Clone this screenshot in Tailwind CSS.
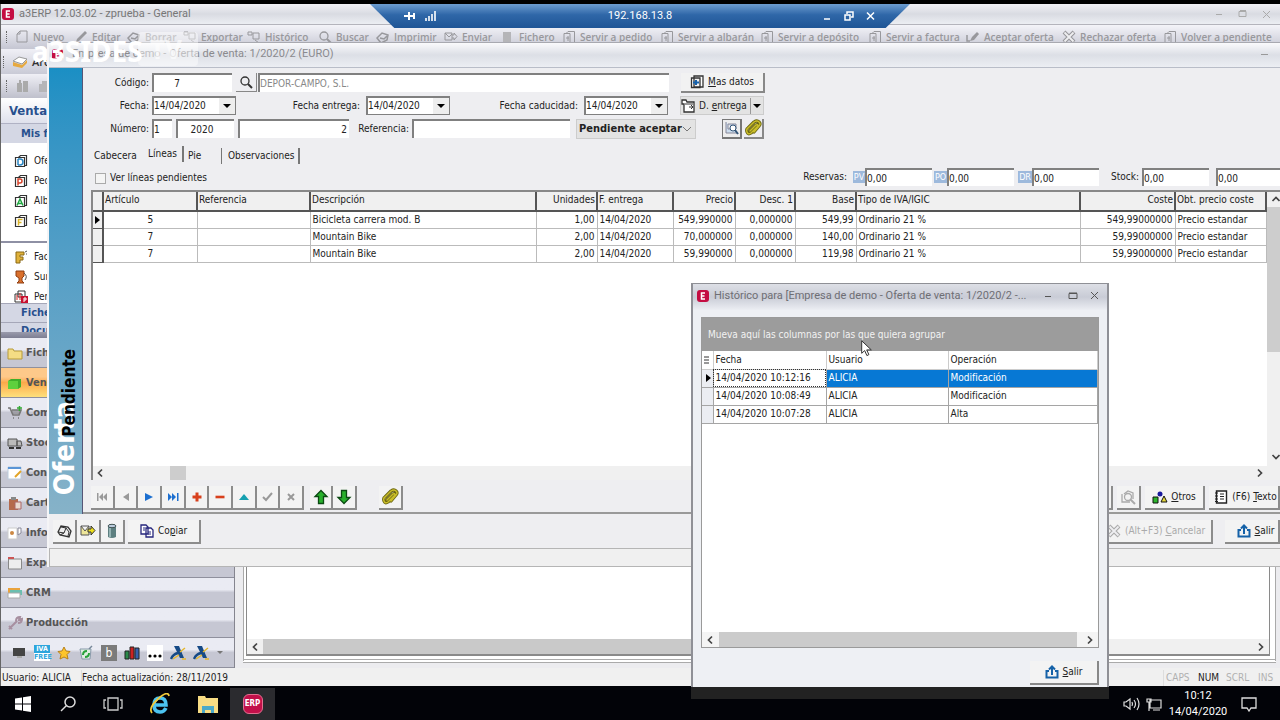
<!DOCTYPE html>
<html lang="es">
<head>
<meta charset="utf-8">
<title>a3ERP 12.03.02 - zprueba - General</title>
<script src="https://cdn.jsdelivr.net/npm/@tailwindcss/browser@4"></script>
</head>
<body class="relative flex h-screen flex-col overflow-hidden bg-black pt-1 font-['DejaVu_Sans_Condensed','DejaVu_Sans',sans-serif] text-[10px] leading-4 text-[#222]">

<svg class="hidden" xmlns="http://www.w3.org/2000/svg">
  <symbol id="e" viewBox="0 0 12 12"><rect width="12" height="12" rx="3" fill="#c40d42"/><path d="M8 3H4.500v6H8M4.500 6h3" fill="none" stroke="#fff" stroke-width="1.500"/></symbol>
  <symbol id="doc" viewBox="0 0 14 14"><path d="M5 1h7v11H2V4z M5 1v3H2" fill="none" stroke="currentColor"/></symbol>
  <symbol id="pen" viewBox="0 0 14 14"><path d="M2 12l1-3 8-8 2 2-8 8z" fill="currentColor"/></symbol>
  <symbol id="docs" viewBox="0 0 14 14"><path d="M4 3.500l2-2h6.500v11H10M4 3.500H2v9h6v-9zM6 6v5M4 8h3" fill="none" stroke="currentColor"/></symbol>
  <symbol id="era" viewBox="0 0 14 14"><path d="M1 8l5-5 6 2-1 5-6 3z M4 8l4 1 3-3" fill="none" stroke="currentColor" stroke-width="1.500"/></symbol>
  <symbol id="lens" viewBox="0 0 14 14"><circle cx="6" cy="6" r="4" fill="none" stroke="currentColor" stroke-width="1.300"/><path d="M9 9l4 4" stroke="currentColor" stroke-width="2"/></symbol>
  <symbol id="hist" viewBox="0 0 14 14"><path d="M1 2h4v3H1zM6 3h6v6H6zM8 10l4 3" fill="none" stroke="currentColor"/></symbol>
  <symbol id="send" viewBox="0 0 14 14"><path d="M1 3h7v7H1zM1 3l4 4 3-3M8 5h2V3l3 3.500-3 3.500V8H8" fill="none" stroke="currentColor"/></symbol>
  <symbol id="print" viewBox="0 0 16 16"><path d="M2 9l3-6 7 1 3 4-2 6-9-2z" fill="#eee" stroke="currentColor" stroke-width="1.300"/><path d="M5 4l5 1-2 5-6-1M10 5l3 4-1 4M4 12l4-2" fill="none" stroke="currentColor"/></symbol>
  <symbol id="chk" viewBox="0 0 14 14"><path d="M1 5v6h3" fill="none" stroke="currentColor" stroke-width="1.500"/><path d="M4 11l2-4 5-5 2 2-5 6z" fill="currentColor"/></symbol>
  <symbol id="xx" viewBox="0 0 14 14"><path d="M2 2l10 10M12 2L2 12" stroke="currentColor" stroke-width="4"/><path d="M2.500 2.500l9 9M11.500 2.500l-9 9" stroke="#eeeef1" stroke-width="1.800"/></symbol>
  <symbol id="clip" viewBox="0 0 18 18"><g fill="none" stroke-linecap="round" stroke-linejoin="round"><path d="M6 12l6-6q2-1 2 1l-7 7q-3 2-4-1t1-4l6-6q3-2 5 0t0 4l-5 6" stroke="#6b6610" stroke-width="3.200"/><path d="M6 12l6-6q2-1 2 1l-7 7q-3 2-4-1t1-4l6-6q3-2 5 0t0 4l-5 6" stroke="#c9bd2a" stroke-width="1.500"/></g></symbol>
  <symbol id="exit" viewBox="0 0 14 14"><path d="M4 6H1.500v6.500h11V6H10M7 10V2M4 4.500L7 1.500l3 3" fill="none" stroke="#1662a8" stroke-width="2"/></symbol>
  <symbol id="left" viewBox="0 0 10 10"><path d="M7 1.500L3.500 5 7 8.500" fill="none" stroke="#444" stroke-width="1.700"/></symbol>
  <symbol id="right" viewBox="0 0 10 10"><path d="M3 1.500L6.500 5 3 8.500" fill="none" stroke="#444" stroke-width="1.700"/></symbol>
  <symbol id="copy" viewBox="0 0 14 14"><path d="M1 1h5l2 2v7H1zM6 4h5l2 2v7H6z" fill="#fff" stroke="#26267c" stroke-width="1.300"/><path d="M3 4h2M3 6h2M8 8h3M8 10h3" stroke="#26267c"/></symbol>
  <symbol id="page" viewBox="0 0 14 14"><path d="M4.500 3.500l2-2h6v10h-2M4.500 3.500h-3v9h9v-9z" fill="#fff" stroke="#333" stroke-width="1.200"/></symbol>
  <symbol id="aeat" viewBox="0 0 16 14"><path d="M4 0h5l5 12h-4z" fill="#164a86"/><path d="M1 13Q3 8 8 7" fill="none" stroke="#164a86" stroke-width="2.500"/><path d="M10 6l5-4M3 13l6-4M12 13h4" stroke="#e5b72c" stroke-width="1.500"/></symbol>
</svg>

<!-- Main application window -->
<main class="flex min-h-0 flex-1 flex-col border-l border-[#666] bg-[#f0f0f2]">
  <header class="flex h-[21px] shrink-0 items-center gap-1 border-b border-[#b4b4bc] bg-linear-to-b from-[#f1f1f5] via-[#d9dbe2] to-[#eceef3] pr-2 pl-px font-[Roboto,sans-serif] text-[11px] text-[#777]">
    <svg class="size-3"><use href="#e"/></svg>
    <h1 class="flex-1 pl-px">a3ERP 12.03.02 - zprueba - General</h1>
    <svg class="h-3 w-14 text-[#aaa]" viewBox="0 0 56 12" fill="none" stroke="currentColor"><path d="M0 6.500h6M23 3.500h7v5h-7zM24 2.500h6M47 3l7 7M54 3l-7 7"/></svg>
  </header>
  <nav class="flex h-6 shrink-0 items-center bg-linear-to-b from-[#f4f4f9] to-[#c5c6d2] pl-[5px] font-['Open_Sans',sans-serif] text-[10px] font-semibold whitespace-nowrap text-[#98989c]">
    <span class="mr-2 h-3 w-0 border-l border-dotted border-[#666]"></span>
    <button class="flex w-[59px] shrink-0 items-center gap-1"><svg class="size-[14px]"><use href="#doc"/></svg>Nuevo</button>
    <button class="flex w-[53px] shrink-0 items-center gap-1"><svg class="size-[14px]"><use href="#pen"/></svg>Editar</button>
    <button class="flex w-[56px] shrink-0 items-center gap-1"><svg class="size-[14px]"><use href="#era"/></svg>Borrar</button>
    <button class="flex w-[64px] shrink-0 items-center gap-1"><svg class="size-[14px]"><use href="#hist"/></svg>Exportar</button>
    <button class="flex w-[71px] shrink-0 items-center gap-1"><svg class="size-[14px]"><use href="#hist"/></svg>Histórico</button>
    <button class="flex w-[58px] shrink-0 items-center gap-1"><svg class="size-[14px]"><use href="#lens"/></svg>Buscar</button>
    <button class="flex w-[68px] shrink-0 items-center gap-1"><svg class="size-[14px]"><use href="#era"/></svg>Imprimir</button>
    <button class="flex w-[57px] shrink-0 items-center gap-1"><svg class="size-[14px]"><use href="#send"/></svg>Enviar</button>
    <button class="flex w-[61px] shrink-0 items-center gap-1"><svg class="size-[14px]" viewBox="0 0 14 14"><path d="M2 2h8v10H2z" fill="#b5b5b8"/></svg>Fichero</button>
    <button class="flex w-[98px] shrink-0 items-center gap-1"><svg class="size-[14px]"><use href="#docs"/></svg>Servir a pedido</button>
    <button class="flex w-[100px] shrink-0 items-center gap-1"><svg class="size-[14px]"><use href="#docs"/></svg>Servir a albarán</button>
    <button class="flex w-[108px] shrink-0 items-center gap-1"><svg class="size-[14px]"><use href="#docs"/></svg>Servir a depósito</button>
    <button class="flex w-[98px] shrink-0 items-center gap-1"><svg class="size-[14px]"><use href="#docs"/></svg>Servir a factura</button>
    <button class="flex w-[96px] shrink-0 items-center gap-1"><svg class="size-[14px]"><use href="#chk"/></svg>Aceptar oferta</button>
    <button class="flex w-[101px] shrink-0 items-center gap-1"><svg class="size-[14px]"><use href="#xx"/></svg>Rechazar oferta</button>
    <button class="flex shrink-0 items-center gap-1"><svg class="size-[14px]"><use href="#docs"/></svg>Volver a pendiente</button>
  </nav>
  <div class="flex h-[25px] shrink-0 items-center gap-1 bg-linear-to-b from-[#f0f0f6] to-[#c9cad6] pl-[2px]">
    <span class="mr-1 h-3 w-0 border-l border-dotted border-[#666]"></span>
    <svg class="size-4" viewBox="0 0 16 16"><path d="M1 7l6-4 8 2-5 5z" fill="#fff" stroke="#999"/><path d="M1 8v4l9 2 5-5V6l-5 5z" fill="#e7a93e"/></svg>
    <button class="font-['Open_Sans',sans-serif] text-[11px] font-semibold text-[#333]">Archivo</button>
  </div>
  <div class="flex h-6 shrink-0 items-center gap-2 bg-linear-to-b from-[#f0f0f6] to-[#bfc0cc] pl-[5px] text-[#aaa]">
    <span class="mr-px h-3 w-0 border-l border-dotted border-[#666]"></span>
    <svg class="size-[14px]" viewBox="0 0 14 14"><path d="M1 4h5v9H1zM7 2h5v11H7zM3 1h2v3H3z" fill="#aaa"/></svg>
    <svg class="size-[14px]" viewBox="0 0 14 14"><path d="M1 5h12v8H1zM4 2h6v3H4z" fill="#b5b5b8"/></svg>
  </div>

  <div class="flex min-h-0 flex-1">
    <aside class="flex w-[234px] shrink-0 flex-col border-r border-[#85858f] bg-[#d6d7e0]">
      <h2 class="flex h-[26px] shrink-0 items-center border-b border-[#b0b2c4] bg-linear-to-b from-white to-[#dfe1ec] pl-2 text-[13px] font-bold text-[#28508e]">Ventas</h2>
      <h3 class="flex h-[19px] shrink-0 items-center bg-[#d4d7e4] pl-5 text-[11px] font-bold text-[#28508e]">Mis favoritos</h3>
      <ul class="border-b-2 border-[#8e90a4] bg-white pt-2 pb-[10px] pl-[13px]">
        <li class="flex h-5 items-center gap-[6px]"><svg class="size-[14px]" viewBox="0 0 14 14"><use href="#page"/><path d="M4 5v6M4 5h2q3 0 3 3t-3 3H4" fill="none" stroke="#2b86c4" stroke-width="1.500"/></svg>Ofertas</li>
        <li class="flex h-5 items-center gap-[6px]"><svg class="size-[14px]" viewBox="0 0 14 14"><use href="#page"/><path d="M4 11.500V5h2q2 0 2 2T6 9H4" fill="none" stroke="#d8452c" stroke-width="1.500"/></svg>Pedidos</li>
        <li class="flex h-5 items-center gap-[6px]"><svg class="size-[14px]" viewBox="0 0 14 14"><use href="#page"/><path d="M3 11.500L6 5l3 6.500M4 9.500h4" fill="none" stroke="#21a843" stroke-width="1.500"/></svg>Albaranes</li>
        <li class="flex h-5 items-center gap-[6px]"><svg class="size-[14px]" viewBox="0 0 14 14"><use href="#page"/><path d="M4.500 11.500V5.500h4M4.500 8.500h3" fill="none" stroke="#d9b42a" stroke-width="1.500"/></svg>Facturas</li>
      </ul>
      <ul class="min-h-0 flex-1 bg-white pt-1 pl-[13px]">
        <li class="flex h-5 items-center gap-[6px]"><svg class="size-[14px]" viewBox="0 0 14 14"><path d="M2 2h8v3H6v2h3v3H6v3H2z" fill="#e0b23b" stroke="#8a6914"/><path d="M11 2l2-1M12 4h1" stroke="#555"/></svg>Facturar</li>
        <li class="flex h-5 items-center gap-[6px]"><svg class="size-[14px]" viewBox="0 0 14 14"><path d="M2 1h8v5l-2 2v3l2 2H3l2-2V8L2 6z" fill="#d9702c" stroke="#8e3d10"/><path d="M10 3q4 3 1 7" fill="none" stroke="#555"/></svg>Suministros</li>
        <li class="flex h-5 items-center gap-[6px]"><svg class="size-[14px]" viewBox="0 0 14 14"><path d="M1 4h7v8H1zM4 1h7v6H4z" fill="#fff" stroke="#333"/><path d="M3 5v5M6 3v7" stroke="#d22"/><path d="M7 6h7v7H7z" fill="#c8102e"/><path d="M10 12V8h2v2h-2" fill="none" stroke="#fff"/></svg>Pendientes</li>
      </ul>
      <h3 class="flex h-5 shrink-0 items-center border-t border-b border-[#a5a7b8] bg-[#d4d7e4] pl-5 text-[11px] font-bold text-[#28508e]">Ficheros</h3>
      <h3 class="h-[9px] shrink-0 overflow-hidden bg-[#d4d7e4] pl-5 text-[11px] font-bold text-[#28508e]">Documentos</h3>
      <div class="h-[6px] shrink-0 bg-linear-to-b from-[#9a9bac] to-[#7d7e92]"></div>
      <ul class="shrink-0 text-[11px] font-bold text-[#555]">
        <li class="flex h-[30px] items-center gap-[3px] border-b border-[#8f909d] bg-linear-to-b from-[#eaebf3] from-40% to-[#c6c7d3] to-50% pl-1.5"><svg class="size-4" viewBox="0 0 16 16"><path d="M1 4h5l1 2h8v8H1z" fill="#f4dc84" stroke="#b69a3a"/></svg>Ficheros</li>
        <li class="flex h-[30px] items-center gap-[3px] border-b border-[#8f909d] bg-linear-to-b from-[#fdc98a] from-30% via-[#fba94a] via-50% to-[#fde07c] pl-1.5"><svg class="size-4" viewBox="0 0 16 16"><path d="M1 6l3-2h10v8l-3 2H1z" fill="#3fae2a"/><path d="M1 6h10v8H1z" fill="#5ed03d"/></svg>Ventas</li>
        <li class="flex h-[30px] items-center gap-[3px] border-b border-[#8f909d] bg-linear-to-b from-[#eaebf3] from-40% to-[#c6c7d3] to-50% pl-1.5"><svg class="size-4" viewBox="0 0 16 16"><path d="M1 3h2l3 7h6l2-5H5M6 13h1M11 13h1" fill="none" stroke="#777" stroke-width="1.700"/><path d="M5 6h8M6 8h7" stroke="#777"/><path d="M10 3h5M12.500 1v5" stroke="#3a3" stroke-width="1.500"/></svg>Compras</li>
        <li class="flex h-[30px] items-center gap-[3px] border-b border-[#8f909d] bg-linear-to-b from-[#eaebf3] from-40% to-[#c6c7d3] to-50% pl-1.5"><svg class="size-4" viewBox="0 0 16 16"><path d="M1 4h9v7H1zM10 6h4l1 5h-5z" fill="#bbb" stroke="#555"/><path d="M2 13h5M9 13h5" stroke="#333" stroke-width="2"/></svg>Stocks</li>
        <li class="flex h-[30px] items-center gap-[3px] border-b border-[#8f909d] bg-linear-to-b from-[#eaebf3] from-40% to-[#c6c7d3] to-50% pl-1.5"><svg class="size-4" viewBox="0 0 16 16"><path d="M1 2h13v12H1z" fill="#fff" stroke="#bcd"/><path d="M1 3h13" stroke="#5b95d6" stroke-width="2"/><path d="M8 12l6-6" stroke="#e2a428" stroke-width="2"/></svg>Contabilidad</li>
        <li class="flex h-[30px] items-center gap-[3px] border-b border-[#8f909d] bg-linear-to-b from-[#eaebf3] from-40% to-[#c6c7d3] to-50% pl-1.5"><svg class="size-4" viewBox="0 0 16 16"><path d="M2 4h9v11H2z" fill="#b4694c"/><path d="M4 2h5v3H4z" fill="#888"/><path d="M8 7h6v7H8z" fill="#e9d8d0" stroke="#a66"/></svg>Cartera</li>
        <li class="flex h-[30px] items-center gap-[3px] border-b border-[#8f909d] bg-linear-to-b from-[#eaebf3] from-40% to-[#c6c7d3] to-50% pl-1.5"><svg class="size-4" viewBox="0 0 16 16"><path d="M1 3h9v11H1z" fill="#fff" stroke="#ccc"/><circle cx="5" cy="8" r="2" fill="#c84"/><path d="M11 3h3v5l-3 2z" fill="#fff" stroke="#889"/></svg>Informes</li>
        <li class="flex h-[30px] items-center gap-[3px] border-b border-[#8f909d] bg-linear-to-b from-[#eaebf3] from-40% to-[#c6c7d3] to-50% pl-1.5"><svg class="size-4" viewBox="0 0 16 16"><path d="M1.500 4h13v10h-13z" fill="#eee" stroke="#888"/><path d="M1 3h6" stroke="#c55" stroke-width="2"/></svg>Expediciones</li>
        <li class="flex h-[30px] items-center gap-[3px] border-b border-[#8f909d] bg-linear-to-b from-[#eaebf3] from-40% to-[#c6c7d3] to-50% pl-1.5"><svg class="size-4" viewBox="0 0 16 16"><path d="M1 3h12v8H1z" fill="#e9a23c"/><path d="M3 5h12v5H3z" fill="#6bbfb0"/><path d="M1 8h12v5H1z" fill="#fff" stroke="#aaa"/></svg>CRM</li>
        <li class="flex h-[30px] items-center gap-[3px] border-b border-[#8f909d] bg-linear-to-b from-[#eaebf3] from-40% to-[#c6c7d3] to-50% pl-1.5"><svg class="size-4" viewBox="0 0 16 16"><path d="M2 14l8-8M9 6q0-4 4-4l-1 3 3-1q0 4-4 4M2 11l3 3" fill="none" stroke="#a78fa0" stroke-width="2"/></svg>Producción</li>
      </ul>
      <div class="flex h-[30px] shrink-0 items-center gap-[7px] border-b border-[#8f909d] bg-linear-to-b from-[#eaebf3] from-40% to-[#c6c7d3] to-50% pl-[10px]">
        <svg class="size-4" viewBox="0 0 16 16"><path d="M2 3h12v8H2z" fill="#444"/><path d="M6 12h5" stroke="#aaa" stroke-width="2"/></svg>
        <span class="flex size-4 flex-col text-center text-[7px] leading-2 font-bold"><b class="bg-[#2ca5dc] text-white">IVA</b><b class="bg-white text-[#2ca5dc]">FREE</b></span>
        <svg class="size-[14px]" viewBox="0 0 14 14"><path d="M7 1l2 4 4 .5-3 3 1 4.500-4-2-4 2 1-4.500-3-3L5 5z" fill="#fdc52c" stroke="#b8801a"/></svg>
        <svg class="size-4" viewBox="0 0 16 16"><path d="M2 4h11l-1 10H4z" fill="#dfeee0" stroke="#89a"/><path d="M5 10q0-4 4-4M11 8q0 4-4 4" fill="none" stroke="#27a23a" stroke-width="2"/><path d="M11 4l3-3" stroke="#789" stroke-width="1.500"/></svg>
        <span class="flex size-4 items-center justify-center bg-[#7b7b7b] text-[12px] text-white">b</span>
        <svg class="size-4" viewBox="0 0 16 16"><path d="M1 6h4v8H1z" fill="#2b8a4a" stroke="#222"/><path d="M6 2h4v12H6z" fill="#c22" stroke="#222"/><path d="M11 3h4v11h-4z" fill="#3661ad" stroke="#222"/></svg>
        <svg class="size-4" viewBox="0 0 16 16"><path d="M0 0h16v16H0z" fill="#fff"/><circle cx="3" cy="11" r="1.600"/><circle cx="8" cy="11" r="1.600"/><circle cx="13" cy="11" r="1.600"/></svg>
        <svg class="size-4"><use href="#aeat"/></svg>
        <svg class="size-4"><use href="#aeat"/></svg>
        <svg class="size-2" viewBox="0 0 8 8"><path d="M1 2h6L4 5z" fill="#777"/></svg>
      </div>
    </aside>
    <section class="flex min-w-0 flex-1 flex-col bg-[#ececef] pr-1 pl-2">
      <div class="flex min-h-0 flex-1 flex-col border-x border-b-4 border-double border-[#aaa] bg-white pr-[5px] pb-[3px] pl-0.5">
        <div class="flex min-h-0 flex-1 flex-col justify-end border-x border-b-2 border-[#8a8a8a] bg-white">
          <div class="flex h-[15px] items-center bg-[#f0f0f0] px-[3px]"><svg class="size-[10px]"><use href="#left"/></svg><span class="mx-[3px] h-full w-3/4 bg-[#c9c9c9]"></span><span class="flex-1"></span><svg class="size-[10px]"><use href="#right"/></svg></div>
        </div>
      </div>
      <div class="h-[5px]"></div>
    </section>
  </div>
  <footer class="flex h-[18px] shrink-0 items-center bg-[#f0f0f0] pt-0.5 text-[#222]">
    <span class="w-[81px] border-r border-[#ddd] pl-px">Usuario: ALICIA</span>
    <span class="flex-1">Fecha actualización: 28/11/2019</span>
    <span class="w-[35px] border-l border-[#ddd] pl-0.5 text-[#b0b0b0]">CAPS</span>
    <span class="w-7">NUM</span>
    <span class="w-8 text-[#b0b0b0]">SCRL</span>
    <span class="w-[22px] text-[#b0b0b0]">INS</span>
  </footer>
</main>

<!-- Taskbar -->
<footer class="flex h-[34px] shrink-0 items-center bg-[#020308] pt-0.5 text-white">
  <button aria-label="Inicio" class="flex w-[45px] justify-center"><svg class="size-4" viewBox="0 0 16 16"><path d="M0 2.500l7-1v6H0zM8 1.300L16 0v7.500H8zM0 8.500h7v6l-7-1zM8 8.500h8V16l-8-1.300z" fill="#fff"/></svg></button>
  <button aria-label="Buscar" class="flex w-[45px] justify-center"><svg class="size-4" viewBox="0 0 16 16" fill="none" stroke="#ddd" stroke-width="1.500"><circle cx="10" cy="6" r="5"/><path d="M6.500 9.500L1 15"/></svg></button>
  <button aria-label="Vista de tareas" class="flex w-[45px] justify-center"><svg class="h-4 w-5" viewBox="0 0 20 16" fill="none" stroke="#ccc" stroke-width="1.300"><path d="M5 2h10v12H5zM3 4H1v8h2M17 4h2v8h-2"/></svg></button>
  <button aria-label="Internet Explorer" class="flex w-[50px] justify-center"><svg class="size-[22px]" viewBox="0 0 22 22" fill="none"><path d="M17 15q-2 4-6 4-6 0-6-7t6-7q6 0 6 7H6" stroke="#4cc3f0" stroke-width="3.600"/><path d="M3 20Q-1 15 9 6t11-3" stroke="#f0c93a" stroke-width="1.800"/></svg></button>
  <button aria-label="Explorador" class="flex w-[45px] justify-center"><svg class="size-5" viewBox="0 0 20 20"><path d="M0 2h7l1 2h12v15H0z" fill="#f7dc84"/><path d="M4 19v-7h12v7h-3v-3H7v3z" fill="#4ba9c9"/></svg></button>
  <button aria-label="a3ERP" class="flex h-full w-[45px] items-center justify-center bg-[#2b2b2f]"><span class="flex size-5 items-center justify-center rounded-md border border-[#e0708f] bg-[#c2104a] text-[8px] font-bold">ERP</span></button>
  <span class="flex-1"></span>
  <svg class="h-4 w-[42px]" viewBox="0 0 42 16" fill="none" stroke="#ddd" stroke-width="1.200"><path d="M3 6h2l4-3v10l-4-3H3zM11 6q1 2 0 4M13 4q3 4 0 8M16 2q4 6 0 12M29 4h11v8H29zM26 3h4v3h-4zM28 6v9M32 14h7"/></svg>
  <time class="w-[70px] text-center font-[Roboto,sans-serif] text-[11px] leading-4">10:12<br>14/04/2020</time>
  <button aria-label="Notificaciones" class="ml-2 mr-[23px] flex"><svg class="size-4" viewBox="0 0 16 16" fill="none" stroke="#ddd" stroke-width="1.300"><path d="M1 2h14v10h-5l-2 3-2-3H1z"/></svg></button>
</footer>

<!-- Offer window -->
<section class="absolute top-[42px] right-0 left-[47px] flex flex-col border-t border-l-2 border-[#a8a9b0] border-l-[#f4f4f6] bg-[#eeeef1]">
  <header class="flex h-[25px] items-center gap-2 border-b border-[#b9bdc8] bg-linear-to-b from-[#fafafc] via-[#dcdfe6] to-[#eceef3] pr-3 pb-0.5 pl-[3px] font-[Roboto,sans-serif] text-[11px] text-[#8a8a8e]">
    <svg class="size-[11px]"><use href="#e"/></svg>
    <h2 class="flex-1 pl-px">Empresa de demo - Oferta de venta: 1/2020/2 (EURO)</h2>
    <span class="h-px w-[7px] bg-[#999]"></span>
  </header>
  <div class="flex h-[446px]">
    <div class="relative w-[34px] shrink-0 border-r border-[#557] bg-linear-to-b from-[#1a8fc4] to-[#86b2c8]">
      <span class="absolute bottom-[19px] left-0.5 rotate-180 text-[29px] leading-[27px] font-bold text-white [writing-mode:vertical-rl]">Oferta</span>
      <span class="absolute bottom-[77px] left-[10px] rotate-180 text-[17px] leading-5 font-bold text-black [writing-mode:vertical-rl]">Pendiente</span>
    </div>
    <div class="flex min-w-0 flex-1 flex-col border-b-2 border-[#999] pl-2">
      <form class="flex flex-col gap-1 pt-[5px] pl-0.5">
        <div class="flex h-[19px] items-center">
          <label for="cod" class="w-[59px] pr-[3px] text-right">Código:</label>
          <input id="cod" value="7" class="h-full w-20 border-t-2 border-l-2 border-[#808080] bg-white pr-8 text-center">
          <button type="button" aria-label="Buscar código" class="mr-px ml-1 flex h-full w-[21px] items-center justify-center border-r border-b border-[#888]"><svg class="size-[14px] text-[#333]"><use href="#lens"/></svg></button>
          <input aria-label="Cliente" value="DEPOR-CAMPO, S.L." class="mr-3 h-full w-[411px] border-t-2 border-l-2 border-[#808080] bg-white text-[#888]">
          <button type="button" class="flex h-5 w-[84px] items-center justify-center gap-1 border-r-2 border-b-2 border-[#888] bg-[#f2f2f2]"><svg class="size-[14px]" viewBox="0 0 14 14"><path d="M4 1h9v11H4zM1.500 3v9.500H10V3z" fill="#fff" stroke="#333" stroke-width="1.300"/><path d="M3 7.500h6M6 5v5" stroke="#1762ac" stroke-width="2"/></svg><span><u>M</u>as datos</span></button>
        </div>
        <div class="flex h-[19px] items-center">
          <label for="fec" class="w-[59px] pr-[3px] text-right">Fecha:</label>
          <div class="flex h-full w-[84px] border-t-2 border-r border-b border-l-2 border-[#808080] bg-white"><input id="fec" value="14/04/2020" class="min-w-0 flex-1"><button type="button" aria-label="Abrir calendario" class="flex w-4 items-center justify-center bg-[#eee]"><svg class="size-2" viewBox="0 0 8 8"><path d="M0 2h8L4 6z"/></svg></button></div>
          <label for="fen" class="w-[130px] pr-[6px] text-right">Fecha entrega:</label>
          <div class="flex h-full w-[84px] border-t-2 border-r border-b border-l-2 border-[#808080] bg-white"><input id="fen" value="14/04/2020" class="min-w-0 flex-1"><button type="button" aria-label="Abrir calendario" class="flex w-4 items-center justify-center bg-[#eee]"><svg class="size-2" viewBox="0 0 8 8"><path d="M0 2h8L4 6z"/></svg></button></div>
          <label for="fca" class="w-[134px] pr-[6px] text-right">Fecha caducidad:</label>
          <div class="mr-3 flex h-full w-[84px] border-t-2 border-r border-b border-l-2 border-[#808080] bg-white"><input id="fca" value="14/04/2020" class="min-w-0 flex-1"><button type="button" aria-label="Abrir calendario" class="flex w-4 items-center justify-center bg-[#eee]"><svg class="size-2" viewBox="0 0 8 8"><path d="M0 2h8L4 6z"/></svg></button></div>
          <button type="button" class="flex h-full w-[84px] items-center border border-[#ccc] bg-[#e3e3e3]"><svg class="mr-1 size-[14px]" viewBox="0 0 14 14"><path d="M1 1h4l1 2h7v10H3V5H1z" fill="#fff" stroke="#333" stroke-width="1.300"/><path d="M4 5h8M8 8h4M10 6l2 2-2 2" fill="none" stroke="#333"/></svg><span class="flex-1 border-r border-[#999] text-left">D. <u>e</u>ntrega</span><svg class="mx-0.5 size-2" viewBox="0 0 8 8"><path d="M0 2h8L4 6z"/></svg></button>
        </div>
        <div class="flex h-[19px] items-center">
          <label for="num" class="w-[59px] pr-[3px] text-right">Número:</label>
          <input id="num" value="1" class="mr-1 h-full w-5 border-t-2 border-l-2 border-[#808080] bg-white">
          <input aria-label="Ejercicio" value="2020" class="mr-1 h-full w-[58px] border-t-2 border-l-2 border-[#808080] bg-white pr-2 text-center">
          <input aria-label="Número de oferta" value="2" class="h-full w-[111px] border-t-2 border-l-2 border-[#808080] bg-white pr-[2px] text-right">
          <label for="ref" class="w-[63px] pr-[3px] text-right">Referencia:</label>
          <input id="ref" class="mr-[6px] h-full w-[158px] border-t-2 border-l-2 border-[#808080] bg-white">
          <div class="mr-[26px] flex h-5 w-[120px] items-center border border-[#ccc] bg-[#e3e3e3] pl-0.5"><select aria-label="Estado" class="flex-1 appearance-none text-[11px] font-bold"><option>Pendiente aceptar</option></select><svg class="mr-1 size-2" viewBox="0 0 8 8"><path d="M0 2l4 4 4-4" fill="none" stroke="#777"/></svg></div>
          <button type="button" aria-label="Vista previa" class="mr-[2px] flex size-5 items-center justify-center border-2 border-t border-l border-[#777] bg-[#eee]"><svg class="size-4" viewBox="0 0 16 16"><path d="M2 2v11h11M4 4h8v5H4z" fill="#cde" stroke="#889"/><circle cx="9" cy="8" r="3" fill="#fff" stroke="#357"/><path d="M11 10l3 4" stroke="#357" stroke-width="2"/></svg></button>
          <button type="button" aria-label="Adjuntos" class="flex size-5 items-center justify-center border-r-2 border-b-2 border-[#888]"><svg class="size-[18px]"><use href="#clip"/></svg></button>
        </div>
      </form>
      <div role="tablist" class="mt-[9px] flex h-[18px] items-center pl-[3px] leading-[18px]">
        <button role="tab" class="w-[54px] text-left">Cabecera</button>
        <button role="tab" class="mb-1 w-9 border-r-2 border-[#777] text-left leading-4">Líneas</button>
        <button role="tab" class="w-[38px] border-r border-[#777] pl-1 text-left leading-4">Pie</button>
        <button role="tab" class="w-[78px] border-r-2 border-[#777] pl-[6px] text-left leading-4">Observaciones</button>
      </div>
      <div class="mt-[3px] flex h-[18px] items-center">
        <label class="flex flex-1 items-center gap-1 pt-0.5 pl-1"><input type="checkbox" class="size-[11px] appearance-none border border-[#aaa] bg-[#f4f4f4]">Ver líneas pendientes</label>
        <label for="pv" class="pr-[6px]">Reservas:</label>
        <span class="w-3 bg-[#9db9dc] text-center text-[9px] leading-3 text-white">PV</span><input id="pv" value="0,00" class="mr-[2px] h-full w-[67px] border-t-2 border-l-2 border-[#808080] bg-white">
        <span class="w-[13px] bg-[#9db9dc] text-center text-[9px] leading-3 text-white">PO</span><input aria-label="PO" value="0,00" class="mr-1 h-full w-[67px] border-t-2 border-l-2 border-[#808080] bg-white">
        <span class="w-[14px] bg-[#9db9dc] text-center text-[9px] leading-3 text-white">DR</span><input aria-label="DR" value="0,00" class="mr-3 h-full w-[67px] border-t-2 border-l-2 border-[#808080] bg-white">
        <label for="st" class="pr-[3px]">Stock:</label>
        <input id="st" value="0,00" class="mr-[7px] h-full w-[67px] border-t-2 border-l-2 border-[#808080] bg-white">
        <input aria-label="Stock total" value="0,00" class="h-full w-16 border-t-2 border-l-2 border-[#808080] bg-white">
      </div>
      <div class="mt-1 flex min-h-0 flex-1 border-t-2 border-l-2 border-[#888] bg-white">
        <div class="flex min-w-0 flex-1 flex-col">
          <table class="w-full table-fixed border-collapse whitespace-nowrap">
            <colgroup><col class="w-[10px]"><col class="w-[94px]"><col class="w-[113px]"><col class="w-[226px]"><col class="w-[61px]"><col class="w-[76px]"><col class="w-[62px]"><col class="w-[60px]"><col class="w-[61px]"><col><col class="w-[95px]"><col class="w-[91px]"></colgroup>
            <thead><tr class="h-[19px] border-b-2 border-[#555] bg-[#f0f0f0] text-left [&>th]:border-r-2 [&>th]:border-[#555] [&>th]:px-px [&>th]:pb-0.5 [&>th]:font-normal">
              <th></th><th>Artículo</th><th>Referencia</th><th>Descripción</th><th class="text-right">Unidades</th><th>F. entrega</th><th class="text-right">Precio</th><th class="text-right">Desc. 1</th><th class="text-right">Base</th><th>Tipo de IVA/IGIC</th><th class="text-right">Coste</th><th>Obt. precio coste</th></tr></thead>
            <tbody class="[&_td]:h-[17px] [&_td]:border-r [&_td]:border-b [&_td]:border-[#bbb] [&_td]:px-0.5 [&_td]:leading-[14px] [&_td:first-child]:border-r-2 [&_td:first-child]:border-[#555] [&_td:first-child]:bg-[#f0f0f0]">
              <tr><td><svg class="h-2 w-[5px]" viewBox="0 0 5 8"><path d="M0 0v8l5-4z"/></svg></td><td class="text-center">5</td><td></td><td>Bicicleta carrera mod. B</td><td class="text-right">1,00</td><td>14/04/2020</td><td class="text-right">549,990000</td><td class="text-right">0,000000</td><td class="text-right">549,99</td><td>Ordinario 21 %</td><td class="text-right">549,99000000</td><td>Precio estandar</td></tr>
              <tr><td></td><td class="text-center">7</td><td></td><td>Mountain Bike</td><td class="text-right">2,00</td><td>14/04/2020</td><td class="text-right">70,000000</td><td class="text-right">0,000000</td><td class="text-right">140,00</td><td>Ordinario 21 %</td><td class="text-right">59,99000000</td><td>Precio estandar</td></tr>
              <tr><td></td><td class="text-center">7</td><td></td><td>Mountain Bike</td><td class="text-right">2,00</td><td>14/04/2020</td><td class="text-right">59,990000</td><td class="text-right">0,000000</td><td class="text-right">119,98</td><td>Ordinario 21 %</td><td class="text-right">59,99000000</td><td>Precio estandar</td></tr>
            </tbody>
          </table>
          <span class="flex-1"></span>
          <div class="flex h-[14px] items-center bg-[#f0f0f0] px-0.5"><svg class="mr-[65px] size-[10px]"><use href="#left"/></svg><span class="h-full w-4 bg-[#cdcdcd]"></span><span class="flex-1"></span><svg class="size-[10px]"><use href="#right"/></svg></div>
        </div>
        <div class="flex w-[13px] flex-col items-center bg-[#f0f0f0]"><svg class="mt-0.5 mb-[3px] ml-1 size-[10px] rotate-90"><use href="#left"/></svg><span class="h-[145px] w-full bg-[#cdcdcd]"></span><span class="flex-1"></span><svg class="mb-[18px] ml-1 size-[10px] rotate-90"><use href="#right"/></svg></div>
      </div>
      <div class="mt-[6px] mb-[2px] flex h-6 shrink-0 items-stretch overflow-hidden whitespace-nowrap [&>button]:flex [&>button]:items-center [&>button]:justify-center [&>button]:border-r-2 [&>button]:border-b-2 [&>button]:border-[#8c8c8c] [&>button]:bg-[#f3f3f3]">
        <button aria-label="Primero" class="w-6"><svg class="size-3" viewBox="0 0 12 12" fill="#999"><path d="M1 2h1.500v8H1zM7 2v8L3 6zM11 2v8L7 6z"/></svg></button>
        <button aria-label="Anterior" class="w-[23px]"><svg class="size-3" viewBox="0 0 12 12"><path d="M9 2v8L3 6z" fill="#999"/></svg></button>
        <button aria-label="Siguiente" class="w-6"><svg class="size-3" viewBox="0 0 12 12"><path d="M2 2v8l8-4z" fill="#1c6fd0"/></svg></button>
        <button aria-label="Último" class="w-6"><svg class="size-3" viewBox="0 0 12 12" fill="#1c6fd0"><path d="M10 2h1.500v8H10zM1 2v8l4-4zM5 2v8l4-4z"/></svg></button>
        <button aria-label="Insertar" class="w-[23px]"><svg class="size-3" viewBox="0 0 12 12"><path d="M6 1.500v9M1.500 6h9" stroke="#d8401c" stroke-width="3"/></svg></button>
        <button aria-label="Eliminar" class="w-6"><svg class="size-3" viewBox="0 0 12 12"><path d="M1.500 6h9" stroke="#d8401c" stroke-width="2.600"/></svg></button>
        <button aria-label="Modificar" class="w-6"><svg class="size-3" viewBox="0 0 12 12"><path d="M6 3l5 6H1z" fill="#16a0b0"/></svg></button>
        <button aria-label="Aceptar" class="w-[23px]"><svg class="size-3" viewBox="0 0 12 12"><path d="M1 6l3 3 6-7" fill="none" stroke="#999" stroke-width="2"/></svg></button>
        <button aria-label="Deshacer" class="mr-[6px] w-6"><svg class="size-3" viewBox="0 0 12 12"><path d="M3 3l6 6M9 3L3 9" stroke="#999" stroke-width="2"/></svg></button>
        <button aria-label="Subir" class="w-[23px]"><svg class="size-4" viewBox="0 0 16 16"><path d="M8 1.500l6 6h-3.500v7h-5v-7H2z" fill="#28b02c" stroke="#0b4a12" stroke-width="1.300"/></svg></button>
        <button aria-label="Bajar" class="mr-[22px] w-6"><svg class="size-4 rotate-180" viewBox="0 0 16 16"><path d="M8 1.500l6 6h-3.500v7h-5v-7H2z" fill="#28b02c" stroke="#0b4a12" stroke-width="1.300"/></svg></button>
        <button aria-label="Adjuntar" class="w-6"><svg class="size-[18px]"><use href="#clip"/></svg></button>
        <span class="flex-1"></span>
        <button aria-label="Detalle" class="mr-1 w-6"></button>
        <button aria-label="Consultar" class="mr-1 w-6"><svg class="size-4" viewBox="0 0 16 16" fill="none" stroke="#aaa" stroke-width="1.300"><path d="M4 5l4-3 5 2v6M2 5v8h8"/><circle cx="8" cy="8" r="3.500"/><path d="M10 10l5 5" stroke-width="2"/></svg></button>
        <button class="mr-1 w-[60px] gap-[3px]"><svg class="size-4" viewBox="0 0 16 16"><path d="M1 8h5v6H1z" fill="#2bb52b" stroke="#111"/><circle cx="8" cy="5" r="2.500" fill="#18189c"/><path d="M12 7l3 6H9z" fill="#e6d83c" stroke="#111"/></svg><span><u>O</u>tros</span></button>
        <button class="w-[71px] gap-1 pl-1"><svg class="size-[14px] shrink-0" viewBox="0 0 14 14"><path d="M2.500 1h10v12h-10z" fill="#fff" stroke="#222" stroke-width="1.400"/><path d="M1 3h3M1 6h3M1 9h3M1 11.500h3M6 4h4M6 6.500h4M6 9h4" stroke="#222"/></svg><span>(F6) <u>T</u>exto</span></button>
      </div>
    </div>
  </div>
  <div class="flex h-[34px] items-center overflow-hidden pt-0.5 pl-1 whitespace-nowrap [&>button]:flex [&>button]:h-6 [&>button]:items-center [&>button]:justify-center [&>button]:border-r-2 [&>button]:border-b-2 [&>button]:border-[#8c8c8c] [&>button]:bg-[#f3f3f3]">
    <button aria-label="Imprimir" class="w-6"><svg class="size-4 text-[#333]"><use href="#print"/></svg></button>
    <button aria-label="Enviar" class="w-6"><svg class="size-4" viewBox="0 0 16 16"><path d="M1 3h8v9H1zM1 3l4 5 4-5" fill="#eee69a" stroke="#555"/><path d="M8 6h3V3l4 4.500-4 4.500V9H8z" fill="#f0e21c" stroke="#333"/></svg></button>
    <button aria-label="Borrar" class="mr-[3px] w-6"><svg class="size-4" viewBox="0 0 16 16"><path d="M4 3v11q4 2 8 0V3z" fill="#5d7f80"/><path d="M6 5v9" stroke="#a9c4c4" stroke-width="1.500"/><ellipse cx="8" cy="3" rx="4" ry="1.700" fill="#bcd" stroke="#455"/></svg></button>
    <button class="w-[73px] gap-1"><svg class="size-[14px]"><use href="#copy"/></svg><span>Co<u>p</u>iar</span></button>
    <span class="flex-1"></span>
    <button class="mr-3 w-[120px] gap-1 pl-2 text-[#aaa]"><svg class="size-[14px]"><use href="#xx"/></svg><span>(Alt+F3) <u>C</u>ancelar</span></button>
    <button class="w-[55px] gap-1 pl-2"><svg class="size-[14px] shrink-0"><use href="#exit"/></svg><span><u>S</u>alir</span></button>
  </div>
  <div class="h-[19px] border border-r-0 border-[#b5b5b5] bg-[#f0f0f0]"></div>
</section>

<!-- Remote desktop connection bar -->
<div class="absolute top-1 left-[370px] flex h-6 w-[540px] items-center bg-linear-to-b from-[#6c9ccf] via-[#2f67a8] via-45% to-[#1f5596] px-[34px] text-white [clip-path:polygon(0_0,100%_0,95.500%_100%,4.500%_100%)]">
  <svg class="h-3 w-8" viewBox="0 0 32 12" fill="none" stroke="#fff"><path d="M0 6h5M5 2v8M5 6h5M10 3v6" stroke-width="2"/><path d="M22 11V8M25 11V6M28 11V4M31 11V1" stroke-width="1.600"/></svg>
  <span class="flex-1 pl-5 text-center font-[Roboto,sans-serif] text-[11px]">192.168.13.8</span>
  <svg class="h-3 w-[52px]" viewBox="0 0 52 12" fill="none" stroke="#fff" stroke-width="1.500"><path d="M0 9h6M21 5h5v5h-5zM23 4V2h6v5h-2M43 2.500l7 7M50 2.500l-7 7"/></svg>
</div>

<!-- Channel watermark -->
<div class="absolute top-8 left-8 flex h-[34px] items-center font-['Noto_Sans',sans-serif] text-[28px] font-bold text-white">
  <span class="w-[106px] pt-1">a3SIDES</span>
  <span class="flex h-full w-[60px] items-center rounded-sm bg-white/45 pl-3 text-[26px] text-white/60">TV</span>
</div>

<!-- History dialog -->
<section class="absolute top-[283px] left-[691px] w-[418px] bg-[#222]">
  <div class="flex h-[404px] flex-col border-x-2 border-t border-[#8f9096] bg-[#eef0f4]">
    <header class="flex h-[26px] shrink-0 items-center gap-[5px] bg-linear-to-b from-[#dddfe6] via-[#c9ccd6] to-[#eceef3] pr-2 pb-0.5 pl-1 font-[Roboto,sans-serif] text-[11px] text-[#6e6e74]">
      <svg class="size-3"><use href="#e"/></svg>
      <h2 class="flex-1 whitespace-nowrap">Histórico para [Empresa de demo - Oferta de venta: 1/2020/2 -...</h2>
      <svg class="h-3 w-[54px]" viewBox="0 0 54 12" fill="none" stroke="#555"><path d="M0 6.500h6M24 3h8M24 3.500h8v5h-8zM46 2l7 7M53 2l-7 7"/></svg>
    </header>
    <div class="mx-2 mt-[7px] flex h-[331px] flex-col border border-[#9a9a9a] bg-white">
      <p class="flex h-[33px] shrink-0 items-center bg-[#9c9c9c] pl-[6px] text-[#f2f2f2]">Mueva aquí las columnas por las que quiera agrupar</p>
      <table class="w-full table-fixed border-collapse">
        <colgroup><col class="w-[11px]"><col class="w-[113px]"><col class="w-[122px]"><col></colgroup>
        <thead><tr class="h-[18px] text-left [&>th]:border-r [&>th]:border-b [&>th]:border-[#ccc] [&>th]:px-0.5 [&>th]:font-normal"><th><svg class="h-2 w-[5px]" viewBox="0 0 5 8"><path d="M0 1h5M0 4h5M0 7h5" stroke="#333"/></svg></th><th>Fecha</th><th>Usuario</th><th>Operación</th></tr></thead>
        <tbody class="[&_td]:h-[18px] [&_td]:border-r [&_td]:border-b [&_td]:border-[#a5a5a5] [&_td]:px-0.5 [&_td]:leading-4 [&_td:first-child]:bg-[#ebedf2]">
          <tr><td><svg class="ml-0.5 h-2 w-[5px]" viewBox="0 0 5 8"><path d="M0 0v8l5-4z"/></svg></td><td class="outline-1 -outline-offset-1 outline-dotted outline-[#333]">14/04/2020 10:12:16</td><td class="bg-[#0778d4] text-white">ALICIA</td><td class="bg-[#0778d4] text-white">Modificación</td></tr>
          <tr><td></td><td>14/04/2020 10:08:49</td><td>ALICIA</td><td>Modificación</td></tr>
          <tr><td></td><td>14/04/2020 10:07:28</td><td>ALICIA</td><td>Alta</td></tr>
        </tbody>
      </table>
      <span class="flex-1"></span>
      <div class="flex h-[15px] items-center bg-[#f4f4f4] px-[3px]"><svg class="size-[10px]"><use href="#left"/></svg><span class="mr-2 ml-1 h-full flex-1 bg-[#cbcbcb]"></span><svg class="size-[10px]"><use href="#right"/></svg></div>
    </div>
    <button class="mt-[13px] mr-2 flex h-6 w-[69px] items-center justify-center gap-1 self-end border-r-2 border-b-2 border-[#888] bg-[#f3f3f3]"><svg class="size-[14px]"><use href="#exit"/></svg><span><u>S</u>alir</span></button>
  </div>
  <div class="h-3"></div>
</section>

<!-- Mouse pointer -->
<svg class="absolute top-[340px] left-[861px] h-[17px] w-3" viewBox="0 0 12 17"><path d="M.7.8v12.500l3-2.700 2.200 5 2-1-2.200-4.700h4.600z" fill="#fff" stroke="#333"/></svg>
</body>
</html>
